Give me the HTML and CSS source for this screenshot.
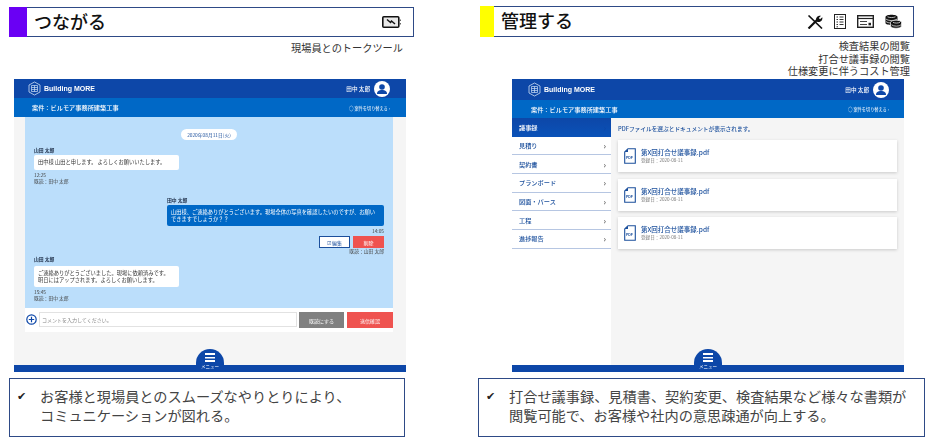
FILE: index.html
```html
<!DOCTYPE html>
<html lang="ja">
<head>
    <meta charset="UTF-8">
    <title>Building MORE</title>
    <link rel="stylesheet" href="styles.css">
</head>
<body>

<div class="page">

    <section class="panel panel-left">
        <div class="title-box">
            <div class="title-mark mark-purple"></div>
            <h2 class="title-text">つながる</h2>
            <div class="title-icons">
                <svg width="19" height="12" viewBox="0 0 19 12">
                    <rect x="0.800" y="0.800" width="16" height="10.400" rx="1" fill="#e8e8e8" stroke="#111" stroke-width="1.600"/>
                    <path d="M5 3.500l3.500 3 1-1.500 3.500 3" fill="none" stroke="#111" stroke-width="1.500"/>
                    <path d="M18.300 3.500v1.500M18.300 7v1.500" stroke="#555" stroke-width="1.200"/>
                </svg>
            </div>
        </div>
        <div class="sub-text">現場員とのトークツール</div>

        <div class="app">
            <div class="app-header">
                <div class="logo">
                    <svg width="13" height="15" viewBox="0 0 13 15">
                        <path d="M6.5 1L12 4v7l-5.500 3L1 11V4z" fill="none" stroke="#cfe0f5" stroke-width="0.8"/>
                        <path d="M3.500 4.500h6v6h-6zM3.500 6.500h6M3.500 8.500h6M6.500 4.500v6" fill="none" stroke="#cfe0f5" stroke-width="0.7"/>
                    </svg>
                    <span>Building MORE</span>
                </div>
                <div class="user">
                    <span>田中 太郎</span>
                    <svg width="16" height="16" viewBox="0 0 16 16">
                        <circle cx="8" cy="8" r="8" fill="#fff"/>
                        <circle cx="8" cy="6" r="2.800" fill="#0d47a8"/>
                        <path d="M3 13c0-3 2-4 5-4s5 1 5 4z" fill="#0d47a8"/>
                    </svg>
                </div>
            </div>
            <div class="app-sub">
                <span class="job-name">案件：ビルモア事務所建築工事</span>
                <span class="job-switch">○ 案件を切り替える ›</span>
            </div>

            <div class="talk-area">
                <div class="chat">
                    <div class="date-pill">2020年08月11日(火)</div>

                    <div class="msg-name name-first">山田 太郎</div>
                    <div class="bubble bubble-in one-line">田中様 山田と申します。 よろしくお願いいたします。</div>
                    <div class="msg-meta">12:25</div>
                    <div class="msg-meta">既読：田中 太郎</div>

                    <div class="msg-out">
                        <div class="msg-name name-out">田中 太郎</div>
                        <div class="bubble bubble-out">山田様、ご連絡ありがとうございます。現場全体の写真を確認したいのですが、お願い<br>できますでしょうか？？</div>
                        <div class="msg-meta meta-right">14:05</div>
                        <div class="msg-actions">
                            <button class="btn-edit" type="button">☑ 編集</button>
                            <button class="btn-delete" type="button">削除</button>
                        </div>
                        <div class="msg-meta meta-right">既読：山田 太郎</div>
                    </div>

                    <div class="msg-name name-last">山田 太郎</div>
                    <div class="bubble bubble-in two-line">ご連絡ありがとうございました。現場に依頼済みです。<br>明日にはアップされます。よろしくお願いします。</div>
                    <div class="msg-meta">15:45</div>
                    <div class="msg-meta">既読：田中 太郎</div>
                </div>

                <div class="input-row">
                    <svg class="plus-icon" width="11" height="11" viewBox="0 0 11 11">
                        <circle cx="5.500" cy="5.500" r="4.700" fill="#fff" stroke="#0d47a8" stroke-width="1.200"/>
                        <path d="M5.500 2.800v5.400M2.800 5.500h5.400" stroke="#0d47a8" stroke-width="1.200"/>
                    </svg>
                    <div class="comment-input">コメントを入力してください。</div>
                    <button class="btn-gray" type="button">既読にする</button>
                    <button class="btn-red" type="button">送信確認</button>
                </div>
            </div>

            <div class="app-footer">
                <div class="menu-btn">
                    <span class="menu-bars"></span>
                    <span class="menu-label">メニュー</span>
                </div>
            </div>
        </div>

        <div class="note-box">
            <span class="check">✔</span>
            <p>お客様と現場員とのスムーズなやりとりにより、<br>コミュニケーションが図れる。</p>
        </div>
    </section>

    <section class="panel panel-right">
        <div class="title-box">
            <div class="title-mark mark-yellow"></div>
            <h2 class="title-text">管理する</h2>
            <div class="title-icons">
                <svg width="16" height="14" viewBox="0 0 16 14">
                    <path d="M1.500 0.500L15 13.500" stroke="#111" stroke-width="1.600"/>
                    <path d="M1.500 13.500L10 5" stroke="#111" stroke-width="2.200"/>
                    <path d="M9 5.500C8.500 2.500 11 0 14 0.800L11.800 3 13 4.300 15.300 2.200C16 5 13.500 7.500 10.500 7z" fill="#111"/>
                </svg>
                <svg width="12" height="15" viewBox="0 0 12 15">
                    <rect x="0.500" y="0.500" width="11" height="14" fill="#fff" stroke="#222"/>
                    <path d="M2.500 3h1.500M5.500 3h4M2.500 5.500h1.500M5.500 5.500h4M2.500 8h1.500M5.500 8h4M2.500 10.500h1.500M5.500 10.500h4M2.500 12.800h1.500" stroke="#333"/>
                </svg>
                <svg width="17" height="13" viewBox="0 0 17 13">
                    <rect x="0.700" y="0.700" width="15.600" height="11.600" fill="#fff" stroke="#222" stroke-width="1.400"/>
                    <path d="M0.700 3.500h15.600" stroke="#222" stroke-width="1.200"/>
                    <path d="M3 6.500h7M3 9.500h7" stroke="#444"/>
                    <rect x="11.500" y="7.800" width="2.500" height="2.500" fill="#222"/>
                </svg>
                <svg width="17" height="15" viewBox="0 0 17 15">
                    <path d="M0.500 3C0.500 0 12.500 0 12.500 3V9C12.500 11.500 0.500 11.500 0.500 9z" fill="#111"/>
                    <path d="M1 5c2 2 9 2 11 0M1 7.500c2 2 9 2 11 0M2.500 2.800c2 1 6 1 8 0" fill="none" stroke="#fff" stroke-width="0.700"/>
                    <path d="M5.500 8.500C5.500 5.500 16.500 5.500 16.500 8.500V12C16.500 15 5.500 15 5.500 12z" fill="#111" stroke="#fff" stroke-width="0.700"/>
                    <path d="M6.500 10.800c2 1.800 8 1.800 9.500 0M8 8.300c2 1 5 1 7 0" fill="none" stroke="#fff" stroke-width="0.700"/>
                </svg>
            </div>
        </div>
        <div class="sub-text">検査結果の閲覧<br>打合せ議事録の閲覧<br>仕様変更に伴うコスト管理</div>

        <div class="app">
            <div class="app-header">
                <div class="logo">
                    <svg width="13" height="15" viewBox="0 0 13 15">
                        <path d="M6.5 1L12 4v7l-5.500 3L1 11V4z" fill="none" stroke="#cfe0f5" stroke-width="0.8"/>
                        <path d="M3.500 4.500h6v6h-6zM3.500 6.500h6M3.500 8.500h6M6.500 4.500v6" fill="none" stroke="#cfe0f5" stroke-width="0.7"/>
                    </svg>
                    <span>Building MORE</span>
                </div>
                <div class="user">
                    <span>田中 太郎</span>
                    <svg width="16" height="16" viewBox="0 0 16 16">
                        <circle cx="8" cy="8" r="8" fill="#fff"/>
                        <circle cx="8" cy="6" r="2.800" fill="#0d47a8"/>
                        <path d="M3 13c0-3 2-4 5-4s5 1 5 4z" fill="#0d47a8"/>
                    </svg>
                </div>
            </div>
            <div class="app-sub">
                <span class="job-name">案件：ビルモア事務所建築工事</span>
                <span class="job-switch">○ 案件を切り替える ›</span>
            </div>

            <div class="doc-area">
                <ul class="side-menu">
                    <li class="side-item active">議事録<span>›</span></li>
                    <li class="side-item">見積り<span>›</span></li>
                    <li class="side-item">契約書<span>›</span></li>
                    <li class="side-item">プランボード<span>›</span></li>
                    <li class="side-item">図面・パース<span>›</span></li>
                    <li class="side-item">工程<span>›</span></li>
                    <li class="side-item">進捗報告<span>›</span></li>
                </ul>
                <div class="doc-list">
                    <div class="doc-hint">PDFファイルを選ぶとドキュメントが表示されます。</div>
                    <div class="doc-card">
                        <svg width="12" height="16" viewBox="0 0 12 16">
                            <path d="M4 0.700h7.300V15.300H0.700V4z" fill="#fff" stroke="#1b4f9c" stroke-width="1.100"/>
                            <path d="M4 0.700V4H0.700z" fill="#1b4f9c"/>
                            <text x="2" y="10.500" class="pdf-mark">PDF</text>
                        </svg>
                        <div>
                            <div class="doc-title">第X回打合せ議事録.pdf</div>
                            <div class="doc-date">登録日：2020-08-11</div>
                        </div>
                    </div>
                    <div class="doc-card">
                        <svg width="12" height="16" viewBox="0 0 12 16">
                            <path d="M4 0.700h7.300V15.300H0.700V4z" fill="#fff" stroke="#1b4f9c" stroke-width="1.100"/>
                            <path d="M4 0.700V4H0.700z" fill="#1b4f9c"/>
                            <text x="2" y="10.500" class="pdf-mark">PDF</text>
                        </svg>
                        <div>
                            <div class="doc-title">第X回打合せ議事録.pdf</div>
                            <div class="doc-date">登録日：2020-08-11</div>
                        </div>
                    </div>
                    <div class="doc-card">
                        <svg width="12" height="16" viewBox="0 0 12 16">
                            <path d="M4 0.700h7.300V15.300H0.700V4z" fill="#fff" stroke="#1b4f9c" stroke-width="1.100"/>
                            <path d="M4 0.700V4H0.700z" fill="#1b4f9c"/>
                            <text x="2" y="10.500" class="pdf-mark">PDF</text>
                        </svg>
                        <div>
                            <div class="doc-title">第X回打合せ議事録.pdf</div>
                            <div class="doc-date">登録日：2020-08-11</div>
                        </div>
                    </div>
                </div>
            </div>

            <div class="app-footer">
                <div class="menu-btn">
                    <span class="menu-bars"></span>
                    <span class="menu-label">メニュー</span>
                </div>
            </div>
        </div>

        <div class="note-box">
            <span class="check">✔</span>
            <p>打合せ議事録、見積書、契約変更、検査結果など様々な書類が<br>閲覧可能で、お客様や社内の意思疎通が向上する。</p>
        </div>
    </section>

</div>

</body>
</html>
```

FILE: styles.css
```css
body {
    margin: 0;
    background-color: #fff;
    color: #222;
    font-family: "Noto Sans CJK JP", "Liberation Sans", sans-serif;
}

button {
    border: none;
    padding: 0;
    font-family: inherit;
}

.page {
    display: flex;
    height: 447px;
    overflow: hidden;
    padding-left: 9px;
}

.panel {
    display: flex;
    flex-direction: column;
    flex-shrink: 0;
}

.panel-left {
    width: 405px;
    margin-right: 64px;
    padding-top: 7px;
}

.panel-right {
    width: 447px;
    padding-top: 6px;
}

/* title */

.title-box {
    display: flex;
    align-items: center;
    box-sizing: border-box;
    border: 1px solid #2e4a86;
}

.panel-left .title-box {
    width: 405px;
    height: 30px;
}

.panel-right .title-box {
    width: 434px;
    height: 31px;
    margin-left: 2px;
}

.title-mark {
    align-self: stretch;
    margin: -1px 0 -1px -1px;
}

.mark-purple {
    width: 18px;
    background-color: #6a00f4;
}

.mark-yellow {
    width: 14px;
    background-color: #ffff00;
}

.title-text {
    flex: 1;
    margin: 0;
    padding-bottom: 3px;
    font-size: 18px;
    font-weight: 500;
    line-height: 1;
    color: #111;
}

.panel-left .title-text {
    padding-left: 7px;
}

.panel-right .title-text {
    padding-left: 7px;
}

.title-icons {
    display: flex;
    align-items: center;
}

.panel-left .title-icons {
    padding-right: 12px;
}

.panel-right .title-icons {
    gap: 11px;
    padding-right: 11px;
}

.sub-text {
    box-sizing: border-box;
    height: 42px;
    font-size: 10.200px;
    line-height: 12.500px;
    text-align: right;
    color: #333;
}

.panel-left .sub-text {
    padding: 5px 11px 0 0;
}

.panel-right .sub-text {
    margin-right: 15px;
    padding-top: 3px;
}

/* app screen */

.app {
    position: relative;
    display: flex;
    flex-direction: column;
    box-sizing: border-box;
    width: 392px;
    height: 293px;
    background-color: #f5f5f5;
    filter: blur(0.3px);
}

.panel-left .app {
    margin-left: 5px;
}

.panel-right .app {
    margin-left: 34px;
}

.app-header {
    display: flex;
    flex-shrink: 0;
    justify-content: space-between;
    align-items: center;
    height: 19px;
    background-color: #0d47a8;
    color: #fff;
}

.panel-right .app-header {
    height: 21px;
}

.logo {
    display: flex;
    align-items: center;
    gap: 3px;
    padding-left: 14px;
    font-family: "Liberation Sans", sans-serif;
    font-size: 7px;
    font-weight: bold;
}

.panel-right .logo {
    padding-left: 16px;
}

.user {
    display: flex;
    align-items: center;
    gap: 4px;
    padding-right: 16px;
    font-size: 5.600px;
    font-weight: 500;
}

.panel-right .user {
    padding-right: 15px;
}

.app-sub {
    display: flex;
    flex-shrink: 0;
    justify-content: space-between;
    align-items: center;
    height: 19px;
    padding: 0 16px 0 18px;
    background-color: #0068c6;
    color: #fff;
}

.panel-right .app-sub {
    height: 18px;
    padding: 0 15px 0 19px;
}

.job-name {
    font-size: 6.200px;
    font-weight: 500;
}

.job-switch {
    font-size: 4.200px;
}

/* talk */

.talk-area {
    flex: 1;
    padding: 0 13px 0 11px;
}

.chat {
    box-sizing: border-box;
    height: 191px;
    padding: 12px 9px 0;
    background-color: #bbdefb;
    font-size: 5.500px;
    line-height: 6px;
    color: #1a2a44;
}

.date-pill {
    width: 56px;
    height: 11px;
    margin: 0 auto;
    border-radius: 6px;
    background-color: #fff;
    font-size: 4.800px;
    line-height: 11px;
    text-align: center;
    color: #1b4f9c;
}

.msg-name {
    font-size: 4.800px;
    font-weight: bold;
}

.name-first {
    margin-top: 7px;
}

.name-out {
    margin-top: 13px;
}

.name-last {
    margin-top: 2px;
}

.bubble {
    position: relative;
    box-sizing: border-box;
    margin-top: 2px;
    padding: 3.500px 4px;
    border-radius: 2px;
    font-size: 5.250px;
    line-height: 7px;
    white-space: nowrap;
}

.bubble-in {
    width: 145px;
    background-color: #fff;
    color: #333;
}

.name-last + .bubble {
    margin-top: 4px;
}

.one-line {
    height: 15px;
    padding-top: 4px;
}

.two-line {
    height: 21px;
}

.bubble-out {
    height: 21px;
    background-color: #0068c6;
    color: #fff;
}

.msg-out {
    width: 217px;
    margin-left: auto;
}

.msg-meta {
    margin-top: 0;
    font-size: 4.800px;
    color: #444;
}

.bubble + .msg-meta {
    margin-top: 2px;
}

.meta-right {
    text-align: right;
}

.msg-actions {
    display: flex;
    justify-content: flex-end;
    gap: 3px;
    margin-top: 2px;
}

.btn-edit {
    box-sizing: border-box;
    width: 31px;
    height: 12px;
    border: 1px solid #1b4f9c;
    background-color: #fff;
    font-size: 5px;
    color: #1b4f9c;
}

.btn-delete {
    width: 31px;
    height: 12px;
    background-color: #ef5350;
    font-size: 5px;
    color: #fff;
}

.input-row {
    display: flex;
    align-items: flex-start;
    box-sizing: border-box;
    height: 24px;
    padding-top: 4px;
    background-color: #fff;
}

.plus-icon {
    flex-shrink: 0;
    margin: 2px 2px 0 1px;
}

.comment-input {
    box-sizing: border-box;
    width: 258px;
    height: 15px;
    margin-right: 2px;
    padding-left: 2px;
    border: 1px solid #e2e2e2;
    background-color: #fff;
    font-size: 5px;
    line-height: 13px;
    color: #888;
}

.btn-gray,
.btn-red {
    height: 16px;
    font-size: 5px;
    color: #fff;
}

.btn-gray {
    width: 45px;
    margin-right: 3px;
    background-color: #808080;
}

.btn-red {
    width: 46px;
    background-color: #ef5350;
}

/* documents */

.doc-area {
    display: flex;
    flex: 1;
    min-height: 0;
}

.side-menu {
    flex-shrink: 0;
    box-sizing: border-box;
    width: 99px;
    margin: 0;
    padding: 0;
    list-style: none;
    background-color: #fff;
}

.side-item {
    display: flex;
    justify-content: space-between;
    align-items: center;
    box-sizing: border-box;
    height: 18.700px;
    padding: 0 5px 0 7px;
    border-bottom: 1px solid #b6c6e2;
    font-size: 6.200px;
    font-weight: 500;
    color: #1b4f9c;
}

.side-item span {
    font-size: 8px;
    color: #555;
}

.side-item.active {
    border-bottom: none;
    background: linear-gradient(#0d47a8, #0a52b8);
    color: #fff;
}

.side-item.active span {
    color: #0d47a8;
}

.doc-list {
    flex: 1;
    padding: 7px 7px 0;
}

.doc-hint {
    height: 15px;
    font-size: 5.700px;
    font-weight: 500;
    line-height: 8px;
    color: #1b4f9c;
}

.doc-card {
    display: flex;
    align-items: center;
    gap: 5px;
    box-sizing: border-box;
    height: 32px;
    margin-bottom: 6.500px;
    padding-left: 6px;
    background-color: #fff;
    box-shadow: 0 1px 3px rgba(0, 0, 0, 0.18);
}

.doc-title {
    font-size: 6.500px;
    font-weight: 500;
    line-height: 9px;
    color: #1b4f9c;
}

.doc-date {
    font-size: 4.600px;
    line-height: 7px;
    color: #777;
}

.pdf-mark {
    font-family: "Liberation Sans", sans-serif;
    font-size: 3.500px;
    font-weight: bold;
    fill: #1b4f9c;
}

/* footer */

.app-footer {
    flex-shrink: 0;
    height: 7px;
    background-color: #0d47a8;
}

.menu-btn {
    position: absolute;
    left: 50%;
    bottom: 0;
    display: flex;
    flex-direction: column;
    align-items: center;
    width: 28px;
    height: 23px;
    margin-left: -14px;
    border-radius: 14px 14px 0 0;
    background-color: #0d47a8;
    color: #fff;
}

.menu-bars {
    box-sizing: border-box;
    width: 10px;
    height: 9px;
    margin-top: 4px;
    border-top: 2px solid #fff;
    border-bottom: 2px solid #fff;
    background: linear-gradient(#fff, #fff) center / 100% 1.500px no-repeat;
}

.menu-label {
    margin-top: 1px;
    font-size: 4.500px;
    line-height: 6px;
    white-space: nowrap;
}

/* note */

.note-box {
    display: flex;
    box-sizing: border-box;
    height: 59px;
    margin-top: 6px;
    border: 1px solid #2e4a86;
}

.panel-left .note-box {
    width: 396px;
}

.panel-right .note-box {
    width: 447px;
}

.check {
    width: 30px;
    padding: 8px 0 0 7px;
    box-sizing: border-box;
    font-family: "DejaVu Sans", sans-serif;
    font-size: 11px;
    line-height: 19px;
    color: #222;
}

.note-box p {
    margin: 8px 0 0;
    font-size: 14.200px;
    line-height: 19px;
    color: #444;
    white-space: nowrap;
}
```
